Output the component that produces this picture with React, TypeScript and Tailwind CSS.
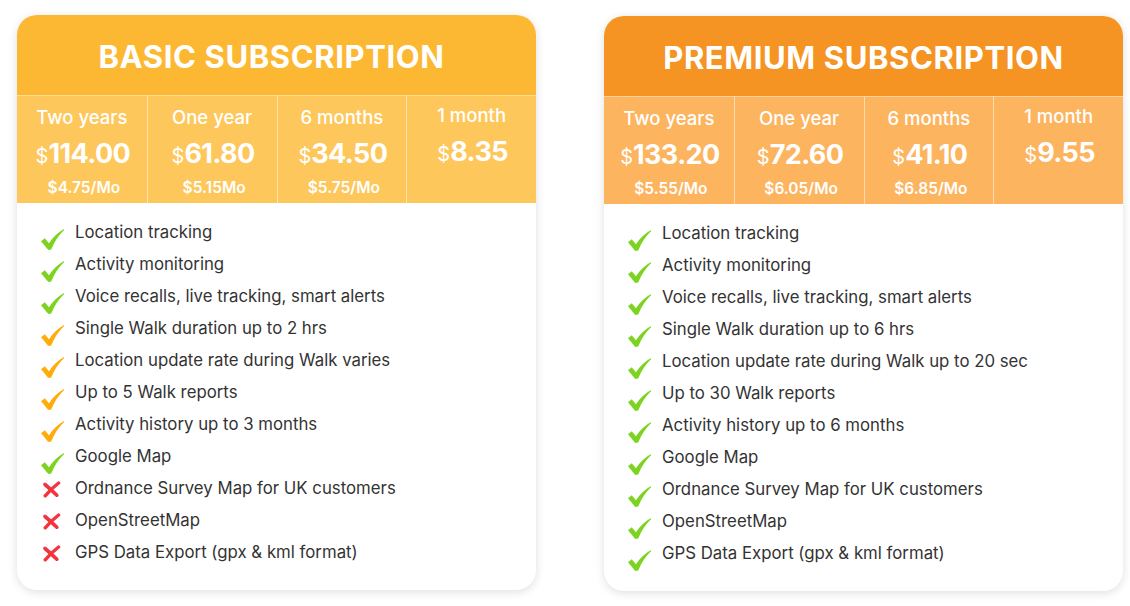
import React from "react";

type Status = "ok" | "warn" | "no";

const Check = ({ color }: { color: string }) => (
  <svg width="23" height="21" viewBox="0 0 22 20" className="shrink-0">
    <path
      d="M0 11.6 L3.6 8.7 L7.6 13.6 Q13 5.2 22 0 L22 1.2 Q14.5 8 9.8 19.6 L7 20 Z"
      fill={color}
    />
  </svg>
);

const Cross = () => (
  <svg width="19" height="17" viewBox="0 0 19 17" className="shrink-0">
    <path d="M3 3.5 Q9 8.5 14.8 14.2" stroke="#f5333f" strokeWidth="3.6" strokeLinecap="round" fill="none" />
    <path d="M16.6 2 Q9.5 7.5 3.2 14.8" stroke="#f5333f" strokeWidth="3.4" strokeLinecap="round" fill="none" />
  </svg>
);

type Price = { label: string; price: string; sub?: string };

const Card = ({
  title,
  headerBg,
  rowBg,
  prices,
  features,
  topClass,
  titleClass,
}: {
  title: string;
  headerBg: string;
  rowBg: string;
  prices: Price[];
  features: [Status, string][];
  topClass: string;
  titleClass: string;
}) => (
  <div className={`w-[519px] h-[575px] rounded-[20px] bg-white shadow-[0_2px_10px_rgba(0,0,0,0.13)] overflow-hidden flex flex-col ${topClass}`}>
    <div className={`h-[80px] flex items-center justify-center ${headerBg}`}>
      <h1 className={`text-white font-bold text-[31px] tracking-[0.6px] leading-none pt-[2px] ${titleClass}`}>{title}</h1>
    </div>
    <div className={`h-[108px] grid grid-cols-4 border-t border-white/40 ${rowBg}`}>
      {prices.map((p, i) => (
        <div
          key={i}
          className={`flex flex-col items-center text-white ${i > 0 ? "border-l border-white/50" : ""}`}
        >
          <div className={`text-[18.5px] font-medium leading-none ${p.sub ? "mt-[12px]" : "mt-[10px]"}`}>{p.label}</div>
          <div className="mt-[13px] leading-none flex items-baseline pl-[2px]">
            <span className="text-[20px] font-normal">$</span>
            <span className="text-[27px] font-bold tracking-[-0.6px]">{p.price}</span>
          </div>
          {p.sub && <div className="mt-[13px] text-[15.5px] font-semibold leading-none pl-[4px]">{p.sub}</div>}
        </div>
      ))}
    </div>
    <ul className="pt-[14px] pl-[24px] flex flex-col">
      {features.map(([s, t], i) => (
        <li key={i} className="h-[32px] flex items-center gap-[10px] text-[16.8px] text-[#333333]">
          {s === "no" ? (
            <span className="w-[24px] h-[21px] flex items-center justify-start pl-[1px]"><Cross /></span>
          ) : (
            <span className="w-[24px] h-[21px] flex items-center justify-start pt-[12px]">
              <Check color={s === "ok" ? "#7ed321" : "#ffad0d"} />
            </span>
          )}
          <span className="leading-none pb-[2px]">{t}</span>
        </li>
      ))}
    </ul>
  </div>
);

export default function App() {
  return (
    <div
      className="w-[1130px] h-[606px] bg-white flex items-start gap-[68px] pl-[17px]"
      style={{ fontFamily: "Inter, 'Noto Sans', sans-serif" }}
    >
      <Card
        topClass="mt-[15px]"
        titleClass="mr-[10px]"
        title="BASIC SUBSCRIPTION"
        headerBg="bg-[#fdb833]"
        rowBg="bg-[#fec75b]"
        prices={[
          { label: "Two years", price: "114.00", sub: "$4.75/Mo" },
          { label: "One year", price: "61.80", sub: "$5.15Mo" },
          { label: "6 months", price: "34.50", sub: "$5.75/Mo" },
          { label: "1 month", price: "8.35" },
        ]}
        features={[
          ["ok", "Location tracking"],
          ["ok", "Activity monitoring"],
          ["ok", "Voice recalls, live tracking, smart alerts"],
          ["warn", "Single Walk duration up to 2 hrs"],
          ["warn", "Location update rate during Walk varies"],
          ["warn", "Up to 5 Walk reports"],
          ["warn", "Activity history up to 3 months"],
          ["ok", "Google Map"],
          ["no", "Ordnance Survey Map for UK customers"],
          ["no", "OpenStreetMap"],
          ["no", "GPS Data Export (gpx & kml format)"],
        ]}
      />
      <Card
        topClass="mt-[16px]"
        titleClass=""
        title="PREMIUM SUBSCRIPTION"
        headerBg="bg-[#f59422]"
        rowBg="bg-[#fdb45f]"
        prices={[
          { label: "Two years", price: "133.20", sub: "$5.55/Mo" },
          { label: "One year", price: "72.60", sub: "$6.05/Mo" },
          { label: "6 months", price: "41.10", sub: "$6.85/Mo" },
          { label: "1 month", price: "9.55" },
        ]}
        features={[
          ["ok", "Location tracking"],
          ["ok", "Activity monitoring"],
          ["ok", "Voice recalls, live tracking, smart alerts"],
          ["ok", "Single Walk duration up to 6 hrs"],
          ["ok", "Location update rate during Walk up to 20 sec"],
          ["ok", "Up to 30 Walk reports"],
          ["ok", "Activity history up to 6 months"],
          ["ok", "Google Map"],
          ["ok", "Ordnance Survey Map for UK customers"],
          ["ok", "OpenStreetMap"],
          ["ok", "GPS Data Export (gpx & kml format)"],
        ]}
      />
    </div>
  );
}
